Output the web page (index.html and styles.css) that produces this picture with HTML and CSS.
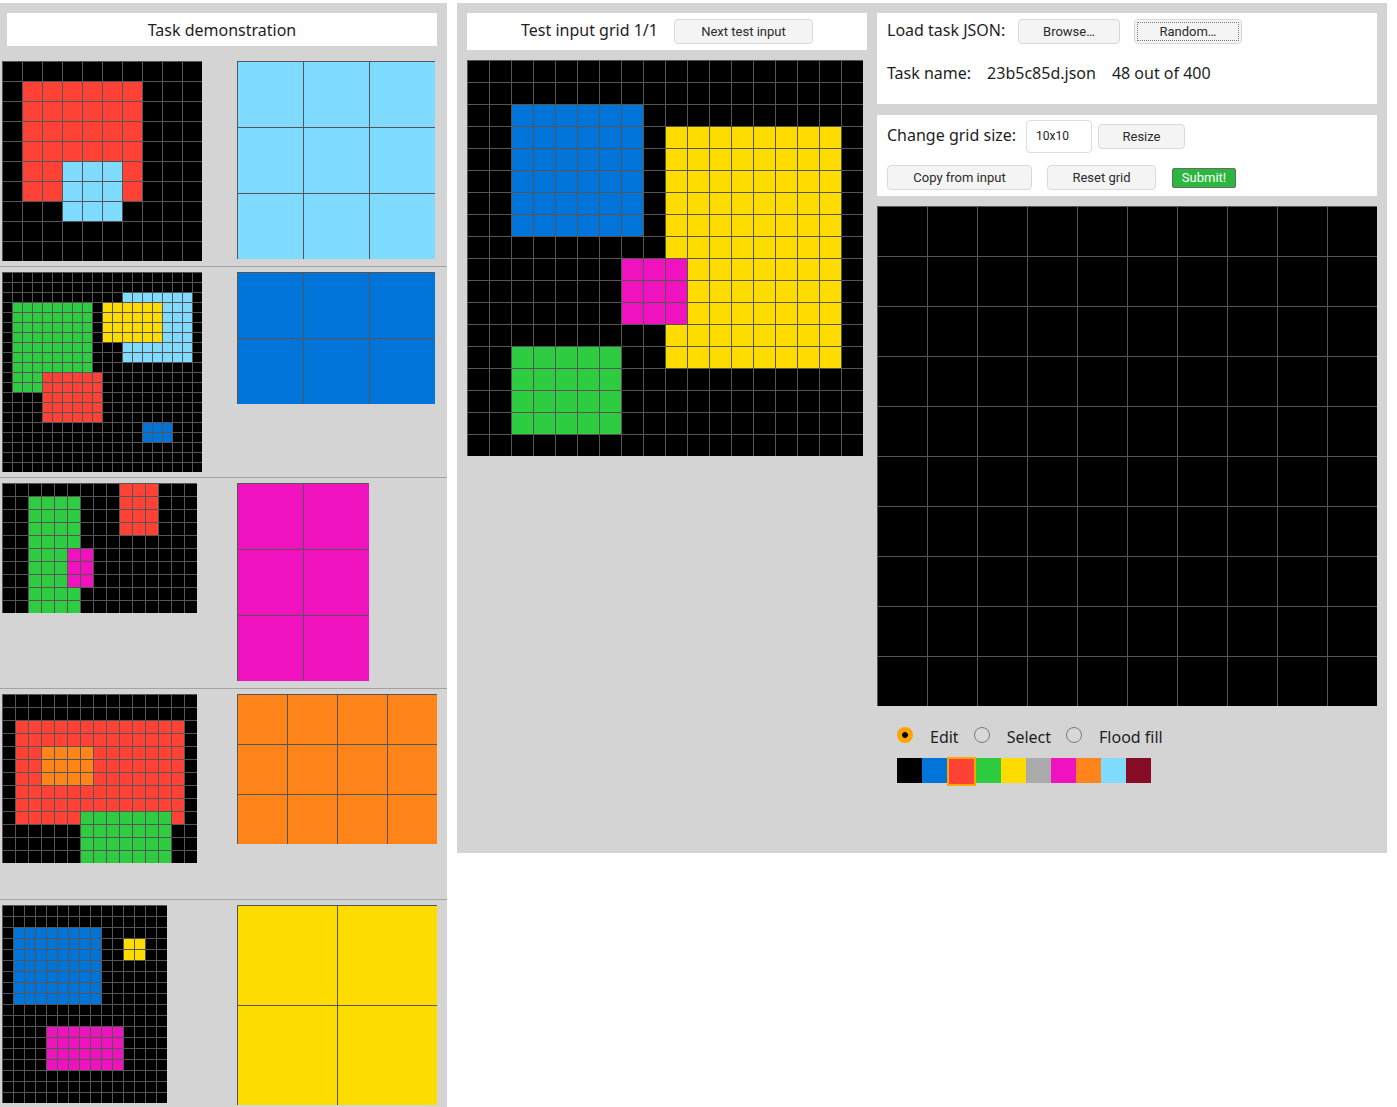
FILE: index.html
```html
<!DOCTYPE html>
<html lang="en">
<head>
<meta charset="utf-8">
<title>ARC testing interface</title>
<link rel="stylesheet" href="styles.css">
</head>
<body>
<div class="page">
  <section class="demo-panel">
    <div class="panel-title">Task demonstration</div>
    <div class="pairs">
      <div class="pair">
        <div class="pair-in"><div class="grid" data-grid="p1in"></div></div>
        <div class="pair-out"><div class="grid" data-grid="p1out"></div></div>
      </div>
      <div class="pair">
        <div class="pair-in"><div class="grid" data-grid="p2in"></div></div>
        <div class="pair-out"><div class="grid" data-grid="p2out"></div></div>
      </div>
      <div class="pair">
        <div class="pair-in"><div class="grid" data-grid="p3in"></div></div>
        <div class="pair-out"><div class="grid" data-grid="p3out"></div></div>
      </div>
      <div class="pair">
        <div class="pair-in"><div class="grid" data-grid="p4in"></div></div>
        <div class="pair-out"><div class="grid" data-grid="p4out"></div></div>
      </div>
      <div class="pair">
        <div class="pair-in"><div class="grid" data-grid="p5in"></div></div>
        <div class="pair-out"><div class="grid" data-grid="p5out"></div></div>
      </div>
    </div>
  </section>

  <section class="work-panel">
    <div class="test-col">
      <div class="test-head">
        <span class="head-text">Test input grid 1/1</span>
        <button class="btn btn-next">Next test input</button>
      </div>
      <div class="grid" data-grid="test" data-max="400"></div>
    </div>

    <div class="edit-col">
      <div class="box box-load">
        <div class="row row-load">
          <span class="label label-load">Load task JSON:</span>
          <button class="btn btn-browse">Browse…</button>
          <button class="btn btn-random">Random…</button>
        </div>
        <div class="row row-name">
          <span>Task name:</span>
          <span>23b5c85d.json</span>
          <span>48 out of 400</span>
        </div>
      </div>

      <div class="box box-tools">
        <div class="row row-size">
          <span class="label label-size">Change grid size:</span>
          <span class="size-input">10x10</span>
          <button class="btn btn-resize">Resize</button>
        </div>
        <div class="row row-actions">
          <button class="btn btn-copy">Copy from input</button>
          <button class="btn btn-reset">Reset grid</button>
          <button class="btn btn-submit">Submit!</button>
        </div>
      </div>

      <div class="output-wrap"><div class="grid" data-grid="output" data-max="500"></div></div>

      <div class="modes">
        <label class="mode"><span class="radio radio-on"></span><span class="mode-text">Edit</span></label>
        <label class="mode"><span class="radio"></span><span class="mode-text">Select</span></label>
        <label class="mode"><span class="radio"></span><span class="mode-text">Flood fill</span></label>
      </div>

      <div class="palette">
        <span class="swatch c0"></span>
        <span class="swatch c1"></span>
        <span class="swatch c2 swatch-on"></span>
        <span class="swatch c3"></span>
        <span class="swatch c4"></span>
        <span class="swatch c5"></span>
        <span class="swatch c6"></span>
        <span class="swatch c7"></span>
        <span class="swatch c8"></span>
        <span class="swatch c9"></span>
      </div>
    </div>
  </section>
</div>
<script src="script.js"></script>
</body>
</html>
```

FILE: styles.css
```css
* { box-sizing: border-box; }

body {
  margin: 0;
  padding-top: 3px;
  font-family: "Noto Sans", "Open Sans", sans-serif;
  color: #1e1e1e;
  background: #fff;
  overflow: hidden;
}

.page {
  display: flex;
  align-items: flex-start;
  gap: 10px;
}

/* ---------- left: demonstration ---------- */
.demo-panel {
  width: 447px;
  height: 1104px;
  overflow: hidden;
  background: #d4d4d4;
  padding-top: 10px;
}

.panel-title {
  margin: 0 10px 0 7px;
  height: 33px;
  padding-top: 1px;
  line-height: 33px;
  background: #fff;
  text-align: center;
  font-size: 16px;
}

.pairs { margin-top: 10px; }

.pair {
  display: flex;
  height: 211px;
  padding: 5px 0 5px 2px;
  border-bottom: 1px solid #a3a3a3;
}

.pair-in { width: 235px; }

/* ---------- grids ---------- */
.grid {
  display: grid;
  width: max-content;
}

.cell {
  border-top: 1px solid #555;
  border-left: 1px solid #555;
}

.c0 { background: #000000; }
.c1 { background: #0074d9; }
.c2 { background: #ff4136; }
.c3 { background: #2ecc40; }
.c4 { background: #ffdc00; }
.c5 { background: #aaaaaa; }
.c6 { background: #f012be; }
.c7 { background: #ff851b; }
.c8 { background: #7fdbff; }
.c9 { background: #870c25; }

/* ---------- right: workspace ---------- */
.work-panel {
  width: 930px;
  height: 850px;
  background: #d4d4d4;
  padding: 10px;
  display: flex;
  align-items: flex-start;
  gap: 10px;
}

.test-col { width: 400px; }

.test-head {
  height: 37px;
  margin-bottom: 10px;
  background: #fff;
  display: flex;
  align-items: center;
  justify-content: center;
  gap: 16px;
  font-size: 16px;
}

.head-text { padding-bottom: 4px; }

.btn {
  font-family: Roboto, "Noto Sans", sans-serif;
  font-size: 13px;
  color: #2b2b2b;
  background: #f4f4f4;
  border: 1px solid #d9d9d9;
  border-radius: 4px;
  height: 25px;
  padding: 0;
  text-align: center;
}

.btn-next { width: 139px; }

.edit-col { width: 500px; }

.box {
  background: #fff;
  padding: 0 10px;
  font-size: 16px;
}

.row { display: flex; align-items: center; }

.box-load { height: 91px; padding-top: 6px; }

.row-load { height: 25px; }

.label-load { width: 131px; padding-bottom: 4px; }

.btn-browse { width: 102px; }

.btn-random {
  width: 108px;
  margin-left: 14px;
  outline: 1px dotted #777;
  outline-offset: -4px;
}

.row-name {
  margin-top: 18px;
  height: 22px;
  gap: 16px;
}

.box-tools {
  margin-top: 11px;
  height: 81px;
  padding-top: 5px;
}

.row-size { height: 33px; }

.label-size { width: 139px; padding-bottom: 3px; }

.size-input {
  width: 66px;
  height: 33px;
  border: 1px solid #dcdcdc;
  border-radius: 4px;
  padding-left: 9px;
  font-family: Roboto, "Noto Sans", sans-serif;
  font-size: 12px;
  line-height: 31px;
  color: #222;
}

.btn-resize { width: 87px; margin-left: 6px; }

.row-actions { margin-top: 12px; height: 25px; }

.btn-copy { width: 145px; }

.btn-reset { width: 109px; margin-left: 15px; }

.btn-submit {
  width: 64px;
  height: 20px;
  margin-left: 16px;
  background: #2cb83f;
  color: #fff;
  border: 1px solid #6a6a6a;
  border-radius: 2px;
  font-size: 13px;
  line-height: 17px;
}

.output-wrap { margin-top: 10px; }

.modes {
  display: flex;
  align-items: center;
  height: 26px;
  margin-top: 16px;
  padding-left: 20px;
  font-size: 16px;
}

.mode { display: flex; align-items: center; }

.mode + .mode { margin-left: 15px; }

.mode-text { padding-top: 4px; }

.radio {
  width: 16px;
  height: 16px;
  border-radius: 50%;
  border: 1.5px solid #7a7a7a;
  margin-right: 17px;
  background: #d8d8d8;
}

.radio-on {
  border: none;
  background: radial-gradient(circle, #000 0 2.6px, #ffa500 3.2px);
}

.palette {
  display: flex;
  align-items: flex-start;
  margin-top: 10px;
  padding-left: 20px;
}

.swatch {
  width: 25px;
  height: 25px;
}

.swatch-on {
  width: 29px;
  height: 29px;
  margin-top: -1px;
  border: 2px solid #ffa500;
}
```

FILE: script.js
```js
// Grid data: [rows, cols, fill colour, [ [colour, rowFrom, rowTo, colFrom, colTo], ... ] ]
var GRIDS = {
  p1in:  [10, 10, 0, [[2, 1, 6, 1, 6], [8, 5, 7, 3, 5]]],
  p1out: [3, 3, 8, []],
  p2in:  [20, 20, 0, [[8, 2, 8, 12, 18], [4, 3, 6, 10, 15], [3, 3, 11, 1, 8], [2, 10, 14, 4, 9], [1, 15, 16, 14, 16]]],
  p2out: [2, 3, 1, []],
  p3in:  [10, 15, 0, [[2, 0, 3, 9, 11], [3, 1, 9, 2, 5], [6, 5, 7, 5, 6]]],
  p3out: [3, 2, 6, []],
  p4in:  [13, 15, 0, [[2, 2, 9, 1, 13], [7, 4, 6, 3, 6], [3, 9, 12, 6, 12]]],
  p4out: [3, 4, 7, []],
  p5in:  [18, 15, 0, [[1, 2, 8, 1, 8], [4, 3, 4, 11, 12], [6, 11, 14, 4, 10]]],
  p5out: [2, 2, 4, []],
  test:  [18, 18, 0, [[1, 2, 7, 2, 7], [4, 3, 13, 9, 16], [6, 9, 11, 7, 9], [3, 13, 16, 2, 6]]],
  output: [10, 10, 0, []]
};

document.querySelectorAll('.grid').forEach(function (el) {
  var d = GRIDS[el.getAttribute('data-grid')];
  if (!d) return;
  var rows = d[0], cols = d[1], fill = d[2], rects = d[3];
  var max = parseInt(el.getAttribute('data-max') || '200', 10);
  var size = Math.floor(max / Math.max(rows, cols));

  var g = [];
  for (var r = 0; r < rows; r++) {
    g.push([]);
    for (var c = 0; c < cols; c++) g[r].push(fill);
  }
  rects.forEach(function (rc) {
    for (var r = rc[1]; r <= rc[2]; r++)
      for (var c = rc[3]; c <= rc[4]; c++) g[r][c] = rc[0];
  });

  el.style.gridTemplateColumns = 'repeat(' + cols + ', ' + size + 'px)';
  el.style.gridAutoRows = size + 'px';

  var frag = document.createDocumentFragment();
  for (var r = 0; r < rows; r++) {
    for (var c = 0; c < cols; c++) {
      var cell = document.createElement('div');
      cell.className = 'cell c' + g[r][c];
      frag.appendChild(cell);
    }
  }
  el.appendChild(frag);
});
```
